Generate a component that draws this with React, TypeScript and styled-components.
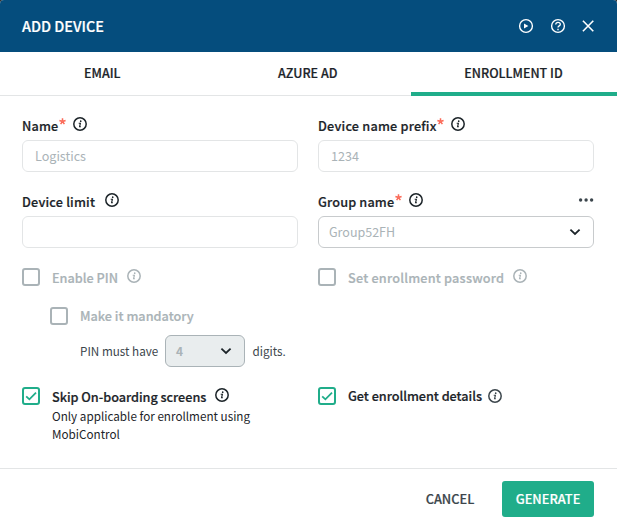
import React from 'react';
import styled, { createGlobalStyle } from 'styled-components';

const ink = '#1c2429';
const slate = '#3c464c';
const muted = '#aab3b7';
const green = '#20ad8a';
const line = '#e3e5e6';

const GlobalStyle = createGlobalStyle`
  * { box-sizing: border-box; }
  body { margin: 0; background: #323232; }
  button, input { font: inherit; }
`;

const Dialog = styled.div`
  width: 617px;
  height: 528px;
  display: flex;
  flex-direction: column;
  background: #fff;
  border-radius: 4px 4px 0 0;
  overflow: hidden;
  color: ${ink};
  font-family: 'Noto Sans CJK SC', 'Noto Sans', sans-serif;
  font-size: 12.6px;
`;

const Header = styled.header`
  height: 52px;
  flex: none;
  display: flex;
  align-items: center;
  justify-content: space-between;
  padding: 0 22px;
  background: #054d7d;
  color: #fff;
`;

const Title = styled.h1`
  margin: 0;
  font-size: 14.4px;
  font-weight: 500;
  line-height: 20px;
  -webkit-text-stroke: 0.2px currentColor;
`;

const HeaderActions = styled.div`
  display: flex;
  align-items: center;
  gap: 16px;
`;

const Tabs = styled.nav`
  height: 44px;
  flex: none;
  display: grid;
  grid-template-columns: 205.5px 205.5px 1fr;
  border-bottom: 1px solid ${line};
`;

const Tab = styled.button<{ $active?: boolean }>`
  height: 44px;
  border: 0;
  border-bottom: 4px solid ${p => (p.$active ? green : 'transparent')};
  background: none;
  background-clip: padding-box;
  padding: 2px 1px 0 0;
  color: ${ink};
  font-size: 12.5px;
  font-weight: 500;
  line-height: 20px;
  -webkit-text-stroke: 0.2px currentColor;
`;

const Body = styled.main`
  flex: 1;
  padding: 20px 23px 0 22px;
`;

const Columns = styled.div`
  display: grid;
  grid-template-columns: 276px 276px;
  column-gap: 20px;
  row-gap: 20px;
`;

const FieldHead = styled.div`
  height: 24px;
  display: flex;
  align-items: flex-start;
`;

const Label = styled.span<{ $spacing?: number; $leading?: number }>`
  font-size: 12.7px;
  font-weight: 500;
  line-height: ${p => p.$leading ?? 20}px;
  letter-spacing: ${p => p.$spacing ?? 0.1}px;
  white-space: nowrap;
  -webkit-text-stroke: 0.2px currentColor;
`;

const Info = styled.svg<{ $gap: number; $drop?: number; $tone?: string }>`
  flex: none;
  width: 14px;
  height: 14px;
  margin: ${p => p.$drop ?? 1}px 0 0 ${p => p.$gap}px;
  color: ${p => p.$tone ?? ink};
`;

const Star = styled.svg`
  width: 7px;
  height: 7px;
  margin: 2px 0 0 0.5px;
`;

const More = styled.svg`
  width: 16px;
  height: 6px;
  margin: 5px 0 0 auto;
`;

const TextInput = styled.input`
  display: block;
  width: 100%;
  height: 32px;
  padding: 0 12px 2px;
  border: 1px solid ${line};
  border-radius: 6px;
  outline: 0;
  background: #fff;
  color: ${ink};
  line-height: 20px;
  &::placeholder { color: ${muted}; opacity: 1; }
`;

const SelectBox = styled.div<{ $disabled?: boolean }>`
  width: ${p => (p.$disabled ? '80px' : '100%')};
  height: 32px;
  display: flex;
  align-items: center;
  justify-content: space-between;
  padding: 0 12px 0 10px;
  border: 1px solid ${p => (p.$disabled ? muted : '#c8cbcd')};
  border-radius: 6px;
  background: ${p => (p.$disabled ? '#e9edee' : '#fff')};
  color: ${muted};
  font-size: ${p => (p.$disabled ? 12 : 12.5)}px;
  font-weight: ${p => (p.$disabled ? 700 : 400)};
  line-height: 20px;
`;

const Option = styled.div<{ $disabled?: boolean }>`
  height: 18px;
  display: flex;
  align-items: flex-start;
  color: ${p => (p.$disabled ? muted : ink)};
`;

const Box = styled.span<{ $checked?: boolean }>`
  flex: none;
  width: 18px;
  height: 18px;
  display: grid;
  place-items: center;
  margin-right: 12px;
  border: 2px solid ${p => (p.$checked ? green : muted)};
  border-radius: 3px;
`;

const Nested = styled.div`
  padding: 21px 0 0 28px;
`;

const PinRow = styled.div`
  display: flex;
  align-items: center;
  margin-top: 10px;
  padding-left: 30px;
`;

const Small = styled.span`
  color: ${slate};
  font-size: 11.7px;
  line-height: 18px;
  white-space: nowrap;
  &:first-child { width: 85px; }
  &:last-child { margin-left: 7.5px; }
`;

const Note = styled.p`
  width: 215px;
  margin: 2px 0 0 30px;
  font-size: 11.7px;
  line-height: 18px;
`;

const Footer = styled.footer`
  height: 60px;
  flex: none;
  display: flex;
  align-items: flex-start;
  justify-content: flex-end;
  gap: 14px;
  padding: 12px 23px 0 0;
  border-top: 1px solid ${line};
`;

const Action = styled.button<{ $primary?: boolean }>`
  height: 36px;
  width: ${p => (p.$primary ? 92 : 76)}px;
  padding: 0;
  border: 0;
  border-radius: 3px;
  background: ${p => (p.$primary ? green : 'transparent')};
  color: ${p => (p.$primary ? '#fff' : slate)};
  font-size: 12.8px;
  font-weight: 500;
  line-height: 20px;
  -webkit-text-stroke: 0.2px currentColor;
`;

function InfoIcon({ gap, drop, tone }: { gap: number; drop?: number; tone?: string }) {
  return (
    <Info $gap={gap} $drop={drop} $tone={tone} viewBox="0 0 14 14" fill="none">
      <circle cx="7" cy="7" r="6.2" stroke="currentColor" strokeWidth="1.5" />
      <circle cx="7.7" cy="4.2" r=".85" fill="currentColor" />
      <path d="M5.7 6.2h1.7L6.6 9.7h1.3" stroke="currentColor" strokeWidth="1.15" />
    </Info>
  );
}

function Required() {
  return (
    <Star viewBox="0 0 7 7">
      <path d="M3.5 3.5V.2M3.5 3.5 6.6 2.5M3.5 3.5 5.4 6.1M3.5 3.5 1.6 6.1M3.5 3.5.4 2.5" stroke="#fb6a58" strokeWidth="1.5" />
    </Star>
  );
}

function Chevron() {
  return (
    <svg width="12" height="8" viewBox="0 0 12 8" fill="none">
      <path d="M1.4 1.7 6 6l4.6-4.3" stroke={ink} strokeWidth="1.8" />
    </svg>
  );
}

function Check() {
  return (
    <svg width="14" height="14" viewBox="0 0 14 14" fill="none">
      <path d="M2.2 7.3 5.4 10.3 12 3.7" stroke={green} strokeWidth="1.8" />
    </svg>
  );
}

export default function App() {
  return (
    <>
      <GlobalStyle />
      <Dialog>
        <Header>
          <Title>ADD DEVICE</Title>
          <HeaderActions>
            <svg width="16" height="16" viewBox="0 0 16 16" fill="none">
              <circle cx="8" cy="8" r="6.4" stroke="#fff" strokeWidth="1.4" />
              <path d="M6 5.5v5L10.4 8z" fill="#fff" />
            </svg>
            <svg width="16" height="16" viewBox="0 0 16 16" fill="none">
              <circle cx="8" cy="8" r="6.4" stroke="#fff" strokeWidth="1.4" />
              <path d="M5.7 6.6c0-1.4 1-2.2 2.3-2.2s2.3.8 2.3 2c0 1.5-2.3 1.5-2.3 3.2" stroke="#fff" strokeWidth="1.3" />
              <path d="M7.3 10.8h1.4v1.4H7.3z" fill="#fff" />
            </svg>
            <svg width="13" height="14" viewBox="0 0 13 14" fill="none">
              <path d="m.9 1.8 10.4 10.4m0-10.4L.9 12.2" stroke="#fff" strokeWidth="1.6" />
            </svg>
          </HeaderActions>
        </Header>
        <Tabs>
          <Tab>EMAIL</Tab>
          <Tab>AZURE AD</Tab>
          <Tab $active>ENROLLMENT ID</Tab>
        </Tabs>
        <Body>
          <Columns>
            <div>
              <FieldHead><Label $spacing={0.15}>Name</Label><Required /><InfoIcon gap={7} /></FieldHead>
              <TextInput placeholder="Logistics" />
            </div>
            <div>
              <FieldHead><Label $spacing={0.2}>Device name prefix</Label><Required /><InfoIcon gap={7} /></FieldHead>
              <TextInput placeholder="1234" />
            </div>
            <div>
              <FieldHead><Label $spacing={0.18}>Device limit</Label><InfoIcon gap={9.5} /></FieldHead>
              <TextInput />
            </div>
            <div>
              <FieldHead>
                <Label $spacing={0.15}>Group name</Label><Required /><InfoIcon gap={7} />
                <More viewBox="0 0 16 6" fill={slate}>
                  <circle cx="2.6" cy="3" r="1.7" /><circle cx="8.1" cy="3" r="1.7" /><circle cx="13.6" cy="3" r="1.7" />
                </More>
              </FieldHead>
              <SelectBox>Group52FH<Chevron /></SelectBox>
            </div>
            <div>
              <Option $disabled><Box /><Label $spacing={0}>Enable PIN</Label><InfoIcon gap={9} tone={muted} /></Option>
              <Nested>
                <Option $disabled><Box /><Label $spacing={0} $leading={18}>Make it mandatory</Label></Option>
                <PinRow>
                  <Small>PIN must have</Small>
                  <SelectBox $disabled>4<Chevron /></SelectBox>
                  <Small>digits.</Small>
                </PinRow>
              </Nested>
            </div>
            <Option $disabled><Box /><Label $spacing={0.2}>Set enrollment password</Label><InfoIcon gap={9} tone={muted} /></Option>
            <div>
              <Option><Box $checked><Check /></Box><Label $spacing={-0.04}>Skip On-boarding screens</Label><InfoIcon gap={8.5} /></Option>
              <Note>Only applicable for enrollment using MobiControl</Note>
            </div>
            <Option><Box $checked><Check /></Box><Label $spacing={-0.04} $leading={18}>Get enrollment details</Label><InfoIcon gap={6} drop={2} tone={slate} /></Option>
          </Columns>
        </Body>
        <Footer>
          <Action>CANCEL</Action>
          <Action $primary>GENERATE</Action>
        </Footer>
      </Dialog>
    </>
  );
}
